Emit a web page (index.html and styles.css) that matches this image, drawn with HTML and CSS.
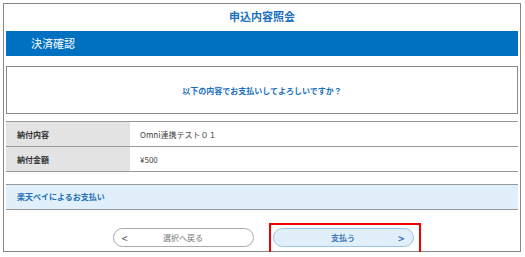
FILE: index.html
```html
<!DOCTYPE html>
<html lang="ja">
  <head>
    <meta charset="UTF-8" />
    <title>申込内容照会</title>
    <link rel="stylesheet" href="styles.css">
  </head>
  <body>
    <div id="frame">
      <h1>申込内容照会</h1>
      <h2 class="bar">決済確認</h2>
      <div class="message">
        <p>以下の内容でお支払いしてよろしいですか？</p>
      </div>
      <table class="details">
        <tr>
          <th>納付内容</th>
          <td>Omni連携テスト０１</td>
        </tr>
        <tr>
          <th>納付金額</th>
          <td>¥500</td>
        </tr>
      </table>
      <div class="method">楽天ペイによるお支払い</div>
      <div id="buttons">
        <button type="button" class="back">
          <span class="arrow">&lt;</span>
          選択へ戻る
        </button>
        <div class="highlight">
          <button type="button" class="pay">
            支払う
            <span class="arrow">&gt;</span>
          </button>
        </div>
      </div>
    </div>
  </body>
</html>
```

FILE: styles.css
```css
* {
  box-sizing: border-box;
  padding: 0;
  margin: 0;
}

body {
  font-family: "Noto Sans CJK JP", "Noto Sans", sans-serif;
  background: #fff;
}

#frame {
  margin: 3px 0 0 3px;
  width: 518px;
  height: 249px;
  border: 1px solid #888;
  padding: 0 2px 0 2px;
}

h1 {
  height: 27px;
  text-align: center;
  font-size: 11px;
  font-weight: bold;
  color: #1a6fc0;
  line-height: 24px;
}

.bar {
  height: 25px;
  background-color: #0070c0;
  color: #fff;
  font-size: 11px;
  font-weight: normal;
  line-height: 25px;
  padding-left: 25px;
}

.message {
  margin-top: 10px;
  height: 48px;
  border: 1px solid #888;
  display: flex;
  justify-content: center;
  align-items: center;
}

.message p {
  font-size: 8px;
  font-weight: bold;
  color: #1a6fc0;
}

.details {
  margin-top: 7px;
  width: 100%;
  border-collapse: collapse;
  border-top: 1px solid #999;
}

.details th,
.details td {
  height: 25px;
  font-size: 8px;
  text-align: left;
  border-bottom: 1px solid #999;
}

.details th {
  width: 124px;
  background-color: #e3e3e3;
  padding-left: 11px;
  color: #333;
}

.details td {
  padding-left: 10px;
  color: #444;
}

.method {
  margin-top: 12px;
  height: 26px;
  border-top: 1px solid #999;
  border-bottom: 1px solid #999;
  background-color: #e1effa;
  color: #1f6fb5;
  font-size: 8px;
  font-weight: bold;
  line-height: 24px;
  padding-left: 11px;
}

#buttons {
  display: flex;
  justify-content: center;
  gap: 19px;
  margin-top: 18px;
  padding-left: 2px;
}

button {
  position: relative;
  width: 141px;
  height: 19px;
  border-radius: 10px;
  font-family: inherit;
  font-size: 8px;
  display: flex;
  justify-content: center;
  align-items: center;
}

button .arrow {
  position: absolute;
  top: 1px;
  font-size: 11px;
}

.back {
  background-color: #fff;
  border: 1px solid #aaa;
  color: #777;
}

.back .arrow {
  left: 8px;
  color: #555;
}

.pay {
  background-color: #e1effa;
  border: 1px solid #9cc4e6;
  color: #3a78b8;
  font-weight: bold;
}

.pay .arrow {
  right: 8px;
  color: #3a78b8;
}

.highlight {
  position: relative;
}

.highlight::after {
  content: "";
  position: absolute;
  left: -4px;
  top: -5px;
  width: 148px;
  height: 33px;
  border: 2px solid #e00;
}
```
